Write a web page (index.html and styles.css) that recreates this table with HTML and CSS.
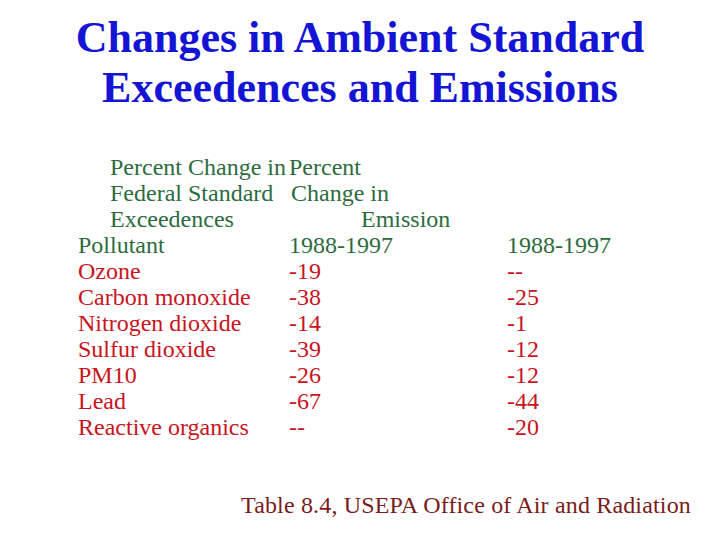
FILE: index.html
```html
<!DOCTYPE html>
<html>
<head>
<meta charset="utf-8">
<link rel="stylesheet" href="styles.css">
</head>
<body>
<div class="slide">
  <h1 class="title">Changes in Ambient Standard<br>Exceedences and Emissions</h1>
  <div class="table">
    <div class="hd ind">Percent Change in</div><div class="hd">Percent</div><div></div>
    <div class="hd ind">Federal Standard</div><div class="hd ind2">Change in</div><div></div>
    <div class="hd ind">Exceedences</div><div class="hd ind3">Emission</div><div></div>
    <div class="hd">Pollutant</div><div class="hd">1988-1997</div><div class="hd">1988-1997</div>
    <div>Ozone</div><div>-19</div><div>--</div>
    <div>Carbon monoxide</div><div>-38</div><div>-25</div>
    <div>Nitrogen dioxide</div><div>-14</div><div>-1</div>
    <div>Sulfur dioxide</div><div>-39</div><div>-12</div>
    <div>PM10</div><div>-26</div><div>-12</div>
    <div>Lead</div><div>-67</div><div>-44</div>
    <div>Reactive organics</div><div>--</div><div>-20</div>
  </div>
  <p class="source">Table 8.4, USEPA Office of Air and Radiation</p>
</div>
</body>
</html>
```
FILE: styles.css
```css
html, body {
  margin: 0;
  padding: 0;
  background: #ffffff;
}
.slide {
  width: 720px;
  height: 540px;
  font-family: "Times New Roman", "Liberation Serif", serif;
  display: flex;
  flex-direction: column;
}
.title {
  margin: 0;
  padding-top: 13px;
  font-size: 44px;
  line-height: 50px;
  font-weight: bold;
  text-align: center;
  color: #1414d4;
}
.table {
  margin-top: 41px;
  margin-left: 78px;
  display: grid;
  grid-template-columns: 211px 218px auto;
  font-size: 24px;
  line-height: 26px;
  color: #c8141e;
  white-space: nowrap;
}
.table .hd {
  color: #2d6b3f;
}
.table .ind {
  padding-left: 32px;
}
.table .ind2 {
  padding-left: 2px;
}
.table .ind3 {
  padding-left: 72px;
}
.source {
  margin: 52px 0 0 0;
  padding-left: 241px;
  font-size: 24px;
  line-height: 26px;
  letter-spacing: 0.16px;
  color: #7a1c1c;
}
```
